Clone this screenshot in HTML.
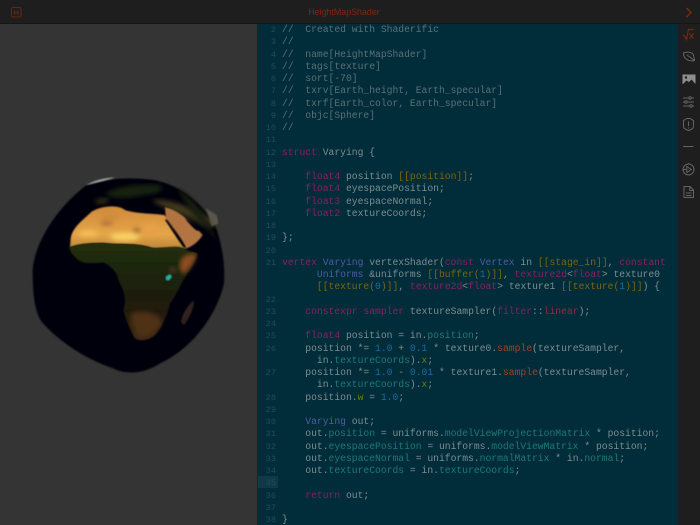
<!DOCTYPE html>
<html lang="en"><head><meta charset="utf-8"><title>HeightMapShader</title>
<style>
html,body{margin:0;padding:0;width:700px;height:525px;overflow:hidden;background:#1e1e1e}
.a{position:absolute}
#hdr{left:0;top:0;width:700px;height:23px;background:#1e1e1e;border-bottom:1px solid #161616}
#title{left:244px;width:200px;top:5px;text-align:center;font:8.9px/14px "Liberation Sans",sans-serif;color:#7c2811}
#view{left:0;top:24px;width:257px;height:501px;background:#343434;border-right:1px solid #222}
#ed{left:258px;top:24px;width:420px;height:501px;background:#012c39;overflow:hidden}
#hl{left:258px;top:476px;width:20px;height:12px;background:#0e3a47}
pre{position:absolute;margin:0;top:24px;font:9.7px/12.25px "Liberation Mono",monospace;filter:blur(.3px)}
#nums{left:258px;width:18px;text-align:right;color:#244c58;font-size:8.6px;height:501px;overflow:hidden}
#code{left:282px;width:396px;color:#7d8e91;height:501px;overflow:hidden}
.c{color:#5a7179}.k{color:#8b2160}.t{color:#4f5e9e}.at{color:#7d6610}.n{color:#1a6c9c}.p{color:#1d7a76}.m{color:#a2421e}.v{color:#6f7a10}.r{color:#962a45}
</style></head><body>
<div class="a" id="hdr"></div>
<svg class="a" style="left:10px;top:6px" width="13" height="13" viewBox="0 0 13 13" fill="none" stroke="#6d2410"><rect x="1.500" y="1.500" width="9.500" height="9.500" rx="1.500"/><path d="M4.500 4v5M8 4v5M4.500 6.500H8"/></svg>
<div class="a" id="title">HeightMapShader</div>
<svg class="a" style="left:684px;top:6px" width="10" height="13" viewBox="0 0 10 13" fill="none" stroke="#7a2a10" stroke-width="1.500"><path d="M2.500 2l4.500 4.500L2.500 11"/></svg>
<div class="a" id="view"></div>
<svg class="a" style="left:20px;top:170px" width="220" height="210" viewBox="0 0 660 630">
<defs>
<filter id="b1"><feGaussianBlur stdDeviation="2"/></filter>
<filter id="b2"><feGaussianBlur stdDeviation="7"/></filter>
<linearGradient id="sah" x1="0" y1="0" x2="0" y2="1"><stop offset="0" stop-color="#cf8a3a"/><stop offset=".65" stop-color="#e5a548"/><stop offset="1" stop-color="#b98238"/></linearGradient>
<linearGradient id="sth" x1="0" y1="0" x2="0" y2="1"><stop offset="0" stop-color="#222f0d"/><stop offset=".35" stop-color="#1b2309"/><stop offset=".7" stop-color="#21190a"/><stop offset="1" stop-color="#3e2915"/></linearGradient>
</defs>
<path filter="url(#b1)" fill="#000007" d="M200 45C260 25 330 20 400 30C470 42 535 85 585 165C606 220 616 285 612 340C590 440 510 540 420 580C370 612 320 615 280 595C200 570 110 510 65 455C40 420 38 350 38 300C42 230 100 120 200 45Z"/>
<path filter="url(#b1)" fill="#a8a8a4" d="M197 46C220 32 250 24 285 22C260 32 225 38 197 46Z"/>
<path filter="url(#b2)" fill="#182410" d="M255 72C290 48 360 40 420 45C440 65 400 72 370 75C330 82 290 92 255 72Z"/>
<path filter="url(#b2)" fill="#40391f" d="M395 90C440 85 500 105 545 130C565 140 590 150 592 168C570 172 545 165 520 150C480 130 430 115 395 90Z"/>
<path filter="url(#b2)" fill="#151a08" d="M470 55C520 85 560 125 600 240C585 205 570 180 545 165C520 130 490 90 470 55Z"/>
<path filter="url(#b1)" fill="#6d6a5c" d="M558 115L590 135L595 160L575 170Z" opacity=".65"/>
<path filter="url(#b2)" fill="#2a2711" d="M222 95C240 78 265 80 268 92C255 105 235 108 222 95Z"/>
<path filter="url(#b1)" fill="url(#sah)" d="M152 205C158 170 190 150 215 125C250 105 295 105 315 120C350 132 400 130 432 135C470 160 455 180 490 225L498 238C470 228 400 240 390 232C340 218 300 225 260 220C220 218 175 222 150 232Z"/>
<path filter="url(#b1)" fill="#b27443" d="M435 112C470 118 510 150 548 195C535 215 520 228 497 236C480 205 462 180 438 150Z"/>
<g filter="url(#b2)">
<ellipse cx="315" cy="200" rx="45" ry="13" fill="#f9d064"/>
<ellipse cx="205" cy="190" rx="30" ry="10" fill="#f3bd58"/>
<ellipse cx="390" cy="178" rx="26" ry="20" fill="#e6a046"/>
<ellipse cx="270" cy="140" rx="30" ry="11" fill="#d08b3c"/>
<ellipse cx="350" cy="182" rx="12" ry="8" fill="#9b6433"/>
<ellipse cx="260" cy="160" rx="20" ry="6" fill="#ab6d37"/>
</g>
<path filter="url(#b1)" fill="#02040c" d="M434 148L442 150C464 180 484 205 498 232L491 232C470 205 452 175 434 148Z"/>
<path filter="url(#b1)" fill="#02040c" d="M494 142L525 165L548 180L530 182C515 170 502 155 494 142Z"/>
<path filter="url(#b1)" fill="url(#sth)" d="M148 232C175 222 220 218 260 220C300 225 340 218 390 232C420 240 470 220 498 238C505 243 520 245 532 250C528 270 510 300 490 330C478 350 470 375 450 400C445 430 425 470 405 495C385 512 360 515 345 505C325 470 315 440 310 420C322 385 310 360 295 330C292 305 270 285 250 278C225 278 195 285 175 270C160 258 150 245 148 232Z"/>
<path filter="url(#b2)" fill="#8e4c24" d="M485 265C500 250 520 250 530 255C520 285 505 300 490 312C478 300 475 285 485 265Z"/>
<path filter="url(#b2)" fill="#4f3219" d="M335 430C370 418 415 430 425 455C415 485 390 505 355 500C338 470 328 445 335 430Z"/>
<path filter="url(#b1)" fill="#30231a" d="M520 392C525 405 512 435 496 460C490 467 484 462 484 450C488 430 505 405 520 392Z"/>
<path filter="url(#b1)" fill="#1eb3a6" d="M437 320L450 312L456 320L448 331L438 331Z"/>
<circle cx="458" cy="300" r="11" fill="#4a3120" filter="url(#b2)"/>
</svg>
<div class="a" id="ed"></div>
<div class="a" id="hl"></div>
<pre id="nums">2
3
4
5
6
7
8
9
10
11
12
13
14
15
16
17
18
19
20
21


22
23
24
25
26

27

28
29
30
31
32
33
34
35
36
37
38</pre>
<pre id="code"><span class="c">//  Created with Shaderific
//
//  name[HeightMapShader]
//  tags[texture]
//  sort[-70]
//  txrv[Earth_height, Earth_specular]
//  txrf[Earth_color, Earth_specular]
//  objc[Sphere]
//</span>

<span class="k">struct</span> Varying {

    <span class="k">float4</span> position <span class="at">[[position]]</span>;
    <span class="k">float4</span> eyespacePosition;
    <span class="k">float3</span> eyespaceNormal;
    <span class="k">float2</span> textureCoords;

};

<span class="k">vertex</span> <span class="t">Varying</span> vertexShader(<span class="k">const</span> <span class="t">Vertex</span> in <span class="at">[[stage_in]]</span>, <span class="k">constant</span>
      <span class="t">Uniforms</span> &amp;uniforms <span class="at">[[buffer(<span class="n">1</span>)]]</span>, <span class="k">texture2d</span>&lt;<span class="k">float</span>&gt; texture0
      <span class="at">[[texture(<span class="n">0</span>)]]</span>, <span class="k">texture2d</span>&lt;<span class="k">float</span>&gt; texture1 <span class="at">[[texture(<span class="n">1</span>)]]</span>) {

    <span class="k">constexpr</span> <span class="k">sampler</span> textureSampler(<span class="k">filter</span>::<span class="r">linear</span>);

    <span class="k">float4</span> position = in.<span class="p">position</span>;
    position *= <span class="n">1.0</span> + <span class="n">0.1</span> * texture0.<span class="m">sample</span>(textureSampler,
      in.<span class="p">textureCoords</span>).<span class="v">x</span>;
    position *= <span class="n">1.0</span> - <span class="n">0.01</span> * texture1.<span class="m">sample</span>(textureSampler,
      in.<span class="p">textureCoords</span>).<span class="v">x</span>;
    position.<span class="v">w</span> = <span class="n">1.0</span>;

    <span class="t">Varying</span> out;
    out.<span class="p">position</span> = uniforms.<span class="p">modelViewProjectionMatrix</span> * position;
    out.<span class="p">eyespacePosition</span> = uniforms.<span class="p">modelViewMatrix</span> * position;
    out.<span class="p">eyespaceNormal</span> = uniforms.<span class="p">normalMatrix</span> * in.<span class="p">normal</span>;
    out.<span class="p">textureCoords</span> = in.<span class="p">textureCoords</span>;

    <span class="k">return</span> out;

}</pre>
<svg class="a" style="left:678px;top:24px" width="22" height="190" viewBox="0 24 22 190" fill="none" stroke="#646464" stroke-width="1">
<g stroke="#76280f" stroke-width="1.200"><path d="M5 35l1.500 1 2 3.500L10.500 29.500H16"/><path d="M11.500 33.500l4 5M15.500 33.500l-4 5"/></g>
<path d="M5.500 53C9 51.500 12.500 52 14.500 53.500C16 55 16 58 16.500 60.500C13 61.500 10 60.500 8 59C6 57.500 5.500 55 5.500 53ZM9 55L16.500 60.500"/>
<rect x="4.500" y="74.500" width="13" height="9.500" fill="#8e8e8e" stroke="none"/>
<path d="M5 84l3.500-3.500 2.500 1.500 2.500-2.500 4 4.500z" fill="#1e1e1e" stroke="none"/>
<circle cx="8" cy="77.500" r="1.200" fill="#1e1e1e" stroke="none"/>
<path d="M5 98H16M5 102H16M5 106H16"/>
<circle cx="12" cy="98" r="1.200" fill="#1e1e1e"/><circle cx="8" cy="102" r="1.200" fill="#1e1e1e"/><circle cx="13" cy="106" r="1.200" fill="#1e1e1e"/>
<path d="M5.500 120.500L8.500 118.500H12L15.500 120.500V126.500C15.500 128.500 12.500 130 10.500 130.500C8.500 130 5.500 128.500 5.500 126.500Z"/>
<path d="M10.500 121.500V126M10.500 127.500V128.500"/>
<path d="M5 146.500H15.500"/>
<circle cx="10.500" cy="169.500" r="5.500"/>
<path d="M8.800 166.500l4.500 3-4.500 3zM5 169.500H8.800M11 164l-.5-1"/>
<path d="M6 186.500H12L15.500 190V197.500H6ZM11.800 186.500V190.500H15.500M8 193H13.500M8 195.500H13.500"/>
</svg>
</body></html>
